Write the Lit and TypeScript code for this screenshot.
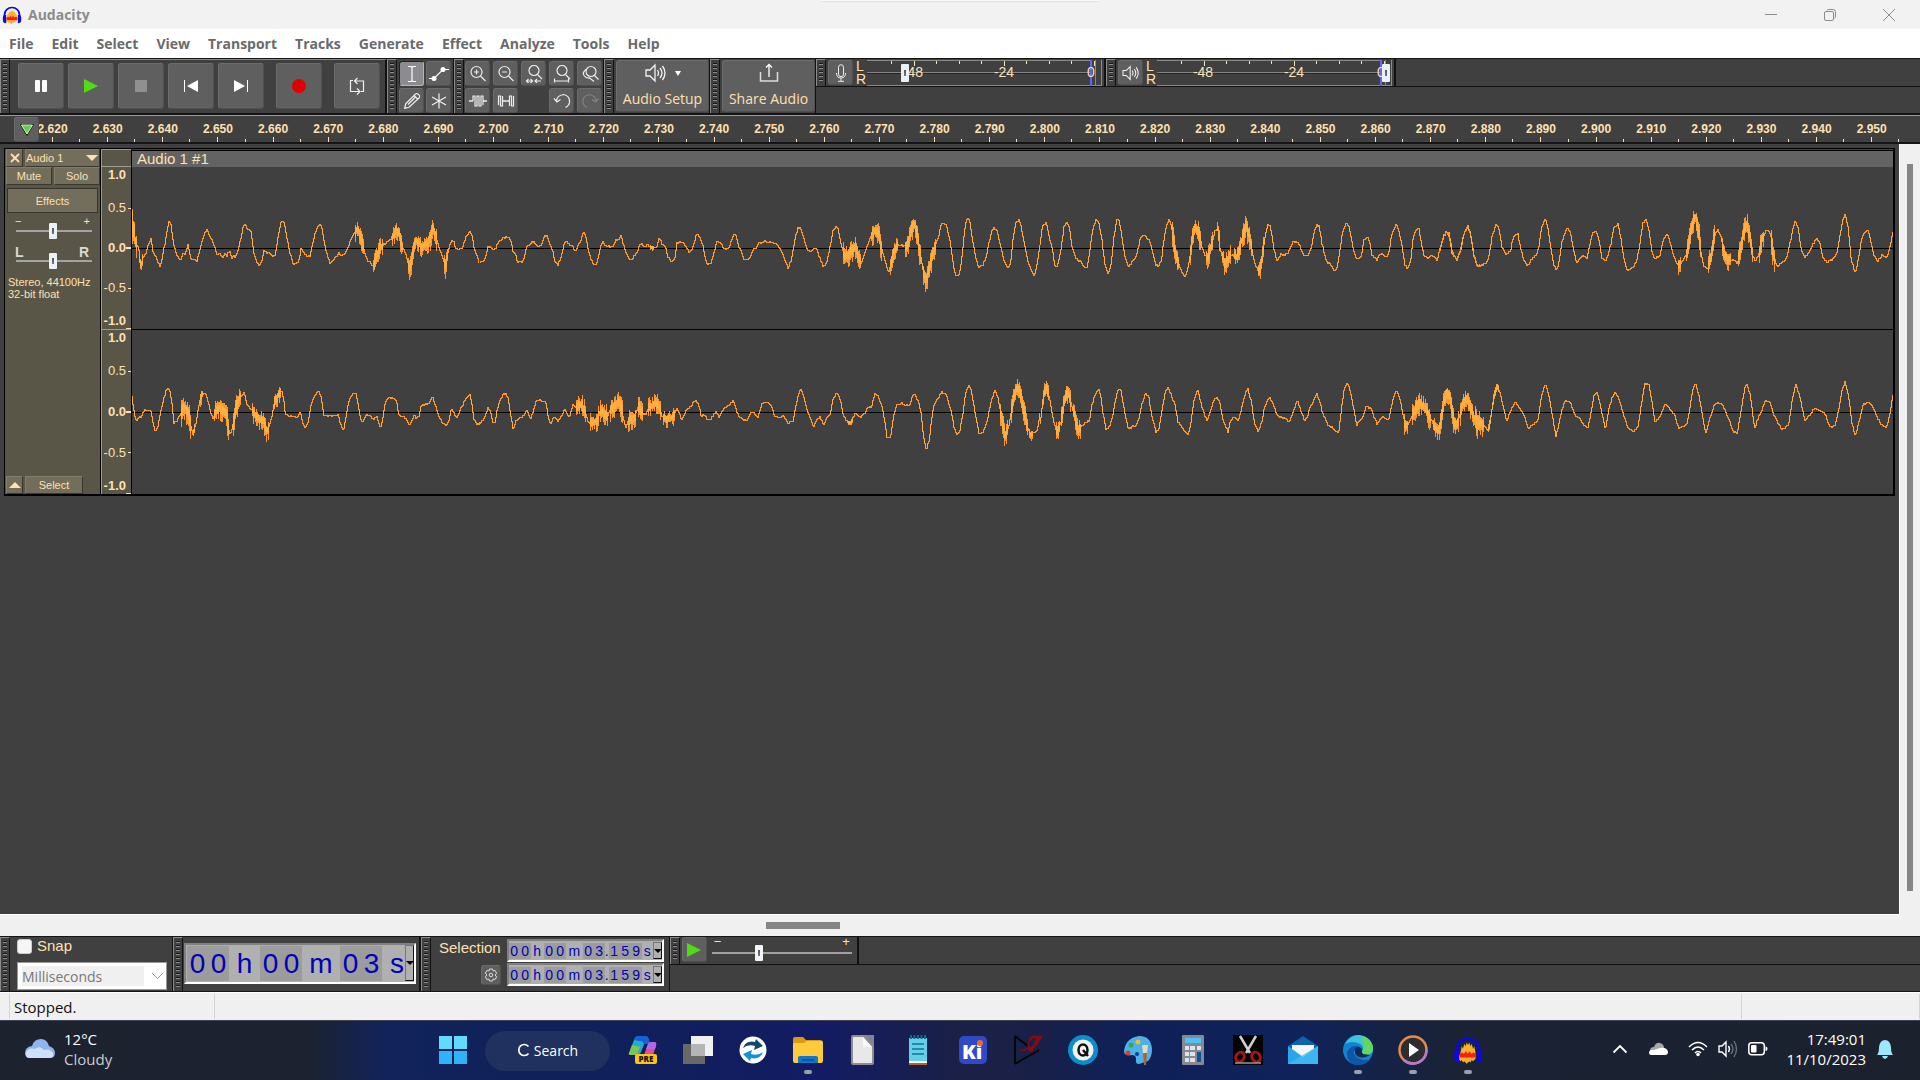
import { LitElement, html, svg, css } from "lit";
import { customElement, property } from "lit/decorators.js";

/* ---------- waveform data ---------- */

interface Block {
  /** Offset of the block inside the clip, in pixels. */
  start: number;
  /** Horizontal samples per pixel. */
  rate: number;
  /** Value that lies on the zero line. */
  zero: number;
  /** "position,value" pairs; three value units to a pixel. */
  points: string;
  /** Noisy stretches: from, to, reach upwards, reach downwards. */
  noise: number[][];
}

const LEFT: Block[] = [
  {
    start: -132, rate: 3, zero: 325,
    points: "396,222 398,285 402,260 405,300 412,318 416,318 421,380 424,375 430,350 436,345 444,315 453,297 460,338 470,355 481,380 488,345 496,305 503,265 507,243 512,245 517,285 524,325 530,340 538,358 542,357 548,340 556,342 564,314 571,350 577,360 580,355 591,363 600,328 605,305 612,285 621,265 628,285 636,300 645,325 652,345 660,340 668,355 676,340 681,350 684,340 690,335 695,355 700,345 706,350 712,338 722,300 729,262 735,252 742,265 753,275 760,330 770,365 779,377 786,360 792,330 797,338 805,335 812,345 820,350 826,345 834,290 842,250 848,241 854,250 860,290 868,330 875,355 881,373 895,368 904,323 912,335 920,349 930,348 938,310 946,275 960,253 966,265 972,300 980,340 990,367 996,363 1004,355 1012,345 1016,338 1022,347 1036,340 1045,320 1052,300 1065,275 1068,265 1078,275 1086,310 1098,350 1104,362 1115,372 1122,378 1130,345 1140,322 1152,312 1168,302 1176,290 1188,270 1200,285 1206,320 1215,335 1222,360 1228,385 1236,350 1246,300 1255,305 1266,320 1280,312 1290,290 1300,260 1308,290 1320,330 1328,350 1336,380 1345,330 1352,310 1361,298 1367,325 1378,325 1384,328 1392,310 1398,290 1411,272 1418,295 1424,330 1432,350 1438,367",
    noise: [[396, 408, 20, 40], [418, 426, 10, 10], [1064, 1090, 26, 30], [1117, 1148, 30, 26], [1174, 1206, 24, 34], [1222, 1236, 20, 42], [1238, 1284, 22, 36], [1286, 1310, 24, 40], [1332, 1342, 20, 40]],
  },
  {
    start: 348, rate: 2.8, zero: 325,
    points: "0,367 8,363 15,355 22,322 30,320 38,328 45,322 50,308 65,294 80,290 86,300 92,332 98,337 105,365 118,366 125,350 131,318 140,314 150,302 160,317 168,318 174,312 180,290 188,287 194,305 204,335 210,365 218,375 228,350 236,310 242,300 250,314 257,315 265,330 270,330 276,312 284,300 290,272 296,287 304,335 312,358 318,373 325,373 332,350 338,320 344,302 352,320 360,318 372,320 380,300 390,298 394,287 402,312 408,335 416,355 424,360 434,345 440,335 450,310 462,320 468,314 476,318 488,325 497,315 502,290 510,312 520,320 526,350 534,363 545,358 552,308 560,307 570,308 580,325 587,338 595,325 600,308 606,278 615,290 625,320 632,360 638,373 648,368 656,335 663,303 675,312 685,327 696,325 705,300 712,283 718,288 724,318 732,335 738,355 744,362 758,350 766,328 775,323 780,308 790,308 797,303 805,308 812,304 820,308 830,312 840,325 850,350 862,382 872,362 878,320 884,288 890,264 898,265 906,290 916,328 926,334 936,322 944,326 950,350 962,380 970,370 978,330 988,275 996,257 1003,265 1010,310 1018,335 1022,350 1032,345 1044,325 1052,320 1060,350 1068,372 1078,335 1088,305 1096,285 1106,272 1116,280 1124,320 1132,355 1144,395 1152,365 1160,330 1168,315 1178,313 1188,318 1198,310 1206,275 1214,248 1222,262 1230,325 1240,385 1250,420 1258,385 1268,340 1276,315 1285,285 1290,258 1297,248 1306,257 1316,300 1325,370 1331,405 1340,405 1348,370 1354,300 1360,250 1366,234 1371,240 1378,290 1388,350 1396,382 1408,375 1418,350 1424,315 1434,268 1440,264 1448,272 1458,318 1468,365 1478,382 1486,366 1492,300 1500,250 1508,238 1514,250 1524,310 1536,370 1552,408 1562,360 1568,315",
    noise: [[474, 486, 6, 10], [1016, 1066, 30, 36], [1094, 1124, 28, 38], [1148, 1170, 22, 30], [1190, 1232, 22, 40], [1238, 1274, 26, 40]],
  },
  {
    start: 868, rate: 3, zero: 325,
    points: "120,312 128,255 137,248 142,260 150,300 158,330 164,375 172,380 180,345 187,300 192,262 200,248 208,260 216,318 224,345 234,362 240,360 256,384 262,380 270,325 278,270 288,238 296,245 306,300 314,370 325,402 334,370 342,290 350,240 357,240 365,285 374,345 386,380 400,362 410,345 420,300 430,281 438,290 450,305 460,345 466,372 474,378 484,365 490,310 500,255 508,235 516,265 524,325 534,370 546,395 554,410 562,395 570,350 578,285 586,265 596,275 606,320 614,345 624,350 636,310 646,270 654,268 660,325 668,352 678,375 688,345 700,345 710,352 720,325 728,285 738,255 748,280 758,340 766,375 778,395 788,345 796,285 805,250 812,262 822,330 832,362 842,342 862,343 870,325 880,303 896,308 910,345 924,345 934,325 942,280 950,253 958,258 966,310 976,352 984,372 988,367 1003,392 1012,380 1020,330 1028,275 1040,246 1048,262 1058,315 1064,345 1074,358 1084,348 1092,300 1102,290 1108,300 1116,345 1130,360 1137,345 1148,342 1160,352 1168,335 1174,290 1182,265 1189,252 1196,270 1206,315 1214,372 1222,385 1232,360 1240,290 1248,270 1256,262 1264,310 1272,345 1284,355 1294,342 1302,350 1311,362 1320,325 1330,290 1342,275 1350,300 1356,340 1370,358 1382,325 1392,280 1404,257 1412,285 1422,345 1434,380 1440,372",
    noise: [[514, 536, 30, 30], [568, 600, 30, 36], [616, 638, 26, 36], [650, 658, 24, 10], [664, 692, 28, 40], [700, 720, 26, 26], [724, 753, 26, 40], [774, 790, 24, 32]],
  },
  {
    start: 1308, rate: 3, zero: 445,
    points: "0,452 6,425 12,405 20,394 28,400 36,450 50,480 64,445 72,400 84,378 92,400 100,460 112,498 124,495 138,490 148,465 156,410 168,375 176,382 186,440 198,465 212,450 220,410 234,402 242,445 250,475 262,500 274,478 288,465 296,445 304,385 316,355 324,385 332,440 340,490 350,512 358,480 366,425 382,382 392,400 400,445 410,487 424,472 430,467 442,472 450,430 460,395 468,392 476,412 486,475 496,485 506,460 514,425 522,380 534,372 542,410 550,465 560,510 575,507 590,485 600,430 608,370 618,357 626,385 636,455 646,477 660,465 670,420 682,402 692,430 702,470 714,495 726,485 740,465 750,410 758,370 767,345 776,400 784,465 792,500 804,505 814,460 824,405 834,388 844,410 852,460 864,475 880,480 892,490 902,450 912,395 920,370 930,410 938,465 946,482 958,460 966,415 982,388 992,400 1000,460 1010,500 1024,490 1040,475 1048,440 1058,390 1066,363 1074,380 1084,450 1094,472 1106,460 1114,440 1130,413 1140,430 1148,470 1160,487 1174,480 1190,462 1198,420 1208,360 1216,342 1224,380 1234,480 1246,518 1256,475 1264,420 1276,392 1286,395 1294,430 1302,465 1312,485 1328,462 1340,474 1350,440 1358,402 1362,390",
    noise: [[712, 722, 36, 32], [738, 780, 34, 30], [802, 824, 30, 20], [844, 872, 26, 36], [892, 936, 30, 28], [956, 970, 30, 30], [992, 1004, 20, 40]],
  },
];

const RIGHT: Block[] = [
  {
    start: -132, rate: 3, zero: 817,
    points: "396,768 400,800 405,830 410,843 418,830 425,828 432,812 440,808 452,810 458,840 466,878 474,858 480,825 488,790 498,752 505,745 511,755 517,800 522,848 532,840 540,825 548,805 562,805 570,840 578,885 588,850 596,800 604,762 618,760 626,790 634,825 640,838 648,810 660,805 668,815 680,825 686,870 691,885 700,850 708,810 716,775 733,758 740,790 750,805 760,815 770,825 780,840 790,835 798,870 806,865 816,830 824,785 834,765 846,752 852,785 856,822 866,828 880,828 892,835 900,815 908,845 917,863 926,840 932,800 942,770 956,753 964,775 972,825 980,828 990,825 1006,828 1014,820 1020,848 1030,873 1038,835 1046,785 1058,762 1068,758 1076,800 1082,840 1088,848 1100,822 1112,830 1122,835 1132,832 1142,865 1150,825 1156,785 1166,773 1182,772 1190,785 1196,825 1206,828 1216,832 1228,855 1236,840 1244,825 1250,835 1258,825 1264,795 1275,792 1286,790 1298,768 1306,795 1316,825 1326,845 1338,857 1348,840 1354,808 1362,815 1370,835 1378,815 1386,798 1398,775 1410,763 1416,795 1422,835 1430,853 1440,850",
    noise: [[542, 570, 30, 50], [577, 582, 12, 8], [598, 607, 16, 26], [642, 684, 30, 40], [698, 720, 32, 34], [756, 806, 24, 34], [822, 842, 20, 28]],
  },
  {
    start: 348, rate: 2.8, zero: 817,
    points: "0,850 8,840 16,825 22,805 30,815 36,845 42,845 48,810 56,780 68,760 78,768 86,825 93,867 102,840 115,832 124,825 131,810 142,838 150,810 156,785 166,778 175,785 184,785 192,835 198,852 208,830 220,843 230,825 238,806 250,832 260,795 272,800 284,795 296,820 304,850 316,845 328,845 338,810 346,815 356,830 366,805 378,800 392,785 400,825 408,862 420,835 432,835 442,800 452,815 464,825 474,800 486,795 500,790 510,830 526,835 540,828 553,805 565,842 578,808 590,800 604,778 614,800 620,832 628,822 640,842 652,830 660,812 670,832 680,810 694,797 710,783 718,812 728,835 738,836 746,845 758,818 768,820 778,832 790,790 805,787 815,793 826,830 838,832 850,828 862,848 876,845 884,800 892,762 898,748 906,765 916,810 922,825 934,860 944,835 952,830 963,855 972,830 980,822 988,780 998,758 1006,768 1018,825 1030,848 1040,848 1050,820 1068,830 1080,815 1086,800 1096,802 1106,760 1116,770 1126,800 1134,850 1140,892 1150,890 1158,830 1166,795 1180,787 1190,797 1204,795 1210,770 1217,760 1228,785 1236,825 1242,890 1250,928 1258,900 1264,840 1270,800 1282,775 1294,755 1306,765 1320,815 1328,865 1336,883 1344,870 1352,820 1360,760 1368,735 1376,750 1386,815 1398,882 1408,878 1420,845 1432,780 1442,750 1450,770 1460,830 1470,885 1480,860 1490,800 1500,750 1508,740 1518,785 1530,850 1540,880 1552,878 1562,865 1568,820",
    noise: [[268, 296, 34, 24], [308, 332, 32, 30], [336, 358, 32, 38], [364, 398, 32, 34], [414, 434, 26, 34], [440, 456, 34, 32], [470, 506, 32, 28], [510, 544, 22, 28], [1030, 1042, 6, 6], [1456, 1478, 26, 32], [1486, 1532, 28, 30], [1536, 1546, 10, 26]],
  },
  {
    start: 868, rate: 3, zero: 817,
    points: "120,850 124,825 130,765 140,740 150,780 160,840 172,880 182,850 192,790 204,755 214,790 224,830 234,870 244,858 256,848 268,840 276,795 284,765 296,747 302,765 308,815 318,866 328,860 338,830 346,780 356,744 364,755 374,815 386,868 400,858 410,855 418,830 426,790 436,760 446,768 456,830 468,876 478,862 486,810 496,755 504,740 514,765 524,790 534,845 548,864 564,885 572,855 582,780 593,748 602,785 612,820 622,842 632,810 642,780 652,772 660,790 668,835 684,876 692,840 702,832 716,840 726,800 736,760 744,745 754,785 764,850 774,874 786,845 794,800 808,770 820,795 830,820 840,830 854,832 868,846 878,820 892,780 902,810 914,840 922,830 930,802 940,785 950,760 960,785 968,820 980,845 984,858 998,862 1016,880 1024,810 1032,750 1042,725 1052,755 1060,800 1070,855 1080,842 1090,830 1098,798 1114,805 1122,832 1132,852 1142,835 1150,830 1166,842 1174,800 1184,760 1192,753 1202,785 1210,830 1218,860 1230,840 1242,815 1256,790 1270,800 1284,820 1296,840 1306,868 1318,868 1328,800 1340,755 1350,770 1360,830 1370,860 1380,820 1390,785 1400,770 1410,800 1422,830 1434,860 1440,850",
    noise: [[128, 144, 26, 30], [168, 178, 24, 30], [182, 212, 26, 34], [218, 242, 24, 34], [1212, 1222, 14, 36], [1236, 1292, 32, 38], [1298, 1332, 28, 32], [1336, 1374, 18, 34], [1380, 1440, 22, 34]],
  },
  {
    start: 1308, rate: 3, zero: 937,
    points: "0,970 8,930 20,870 32,890 42,970 52,970 64,930 78,890 90,915 100,940 112,955 124,970 146,990 156,930 162,885 172,855 182,885 192,930 200,965 210,935 226,905 240,925 252,945 264,985 280,973 294,960 304,890 316,852 326,880 334,930 348,1008 356,975 366,930 376,900 392,908 404,942 418,955 432,975 444,982 454,935 462,885 472,875 482,920 496,988 506,930 516,895 526,873 538,900 550,940 562,980 578,996 594,980 604,915 614,852 626,850 636,905 646,968 662,945 676,912 690,925 704,945 716,985 740,975 748,935 758,870 767,848 778,890 788,950 797,1002 808,960 824,910 844,908 856,930 868,960 880,995 892,1000 904,930 914,865 922,852 932,890 944,985 956,950 966,930 974,903 990,905 1000,940 1012,965 1026,990 1046,975 1056,905 1068,852 1080,890 1094,962 1110,945 1124,922 1140,932 1156,942 1170,982 1186,975 1198,920 1206,870 1216,845 1226,890 1236,970 1246,1005 1256,970 1270,912 1288,907 1300,920 1310,950 1324,972 1340,982 1350,940 1358,890 1362,880",
    noise: [[0, 10, 24, 28], [14, 34, 12, 30], [34, 56, 24, 40], [72, 98, 20, 30], [104, 130, 28, 34], [144, 150, 10, 6], [158, 176, 6, 10]],
  },
];

const CLIP_WIDTH = 1761;

/** Repeatable value from 0 to 1 for a pixel column. */
const jitter = (n: number) => {
  const v = Math.sin(n * 127.1 + 11.7) * 43758.5453;
  return v - Math.floor(v);
};

/** Paths for the sample extent and the brighter RMS core, one bar per pixel column. */
function tracePaths(blocks: Block[], zeroY: number) {
  let outer = "";
  let core = "";
  blocks.forEach((b) => {
    const pts = b.points.split(" ").map((p) => p.split(",").map(Number));
    let k = 0;
    const at = (u: number) => {
      while (k < pts.length - 2 && pts[k + 1][0] < u) k++;
      const [x0, y0] = pts[k];
      const [x1, y1] = pts[k + 1];
      return y0 + ((y1 - y0) * (Math.max(u, x0) - x0)) / (x1 - x0);
    };
    const from = Math.round(b.start + pts[0][0] / b.rate);
    const to = Math.round(b.start + pts[pts.length - 1][0] / b.rate);
    let prev = at(pts[0][0]);
    for (let x = from; x < to; x++) {
      const u = (x - b.start) * b.rate;
      const next = at(u + b.rate) + (jitter(x + 0.5) - 0.5) * 5;
      let hi = Math.min(prev, next);
      let lo = Math.max(prev, next);
      const steep = lo - hi > 12;
      const band = b.noise.find((n) => u >= n[0] && u <= n[1]);
      let coreHi = hi;
      let coreLo = lo;
      if (band) {
        const a = 0.2 + 0.8 * jitter(x);
        const c = 0.2 + 0.8 * jitter(x + 500);
        hi -= band[2] * a;
        lo += band[3] * c;
        coreHi -= band[2] * a * 0.5;
        coreLo += band[3] * c * 0.4;
      }
      const bar = (t: number, d: number) => {
        const y = Math.round(zeroY + (t - b.zero) / 3);
        const h = Math.max(1, Math.round(zeroY + (d - b.zero) / 3) - y + 1);
        return `M${x} ${y}h1v${h}h-1z`;
      };
      outer += bar(hi, lo);
      if (band || steep) core += bar(coreHi + (band ? 0 : 3), coreLo - (band ? 0 : 3));
      prev = next;
    }
  });
  return { outer, core };
}

/* ---------- icons ---------- */

const icon = (w: number, h: number, body: unknown) =>
  html`<svg class="ico" width=${w} height=${h} viewBox="0 0 ${w} ${h}" aria-hidden="true">${body}</svg>`;

const speaker = svg`<path d="M1 7h4l5-5v16l-5-5H1z M12.500 7q2 3 0 6 M15 5q4 5 0 10 M17.500 3q5 7 0 14" fill="none" stroke="#f2f2f2" stroke-width="1.300"/>`;
const lens = (body: unknown) => icon(18, 18, svg`<g fill="none" stroke="#ececec" stroke-width="1.200">${body}</g>`);

const headphones = (s: number) => html`<svg class="ico" width=${s} height=${s} viewBox="0 0 24 24" aria-hidden="true">
  <path d="M6 14l1-5 1 2 1-4 1 2 1-3 1 2 1-2 1 3 1-2 1 4 1-2 1 5v5l-2 2-1-1-1 2-1-1-2 2-2-2-1 1-1-2-1 1-2-2z" fill="#f8b030"/>
  <path d="M5.500 15l2-1 1 1 2-2 1 2 2-2 1 2 2-1 2 1v3h-13z" fill="#f8200c"/>
  <path d="M3 14V12a9 9 0 0 1 18 0v2" fill="none" stroke="#0707e8" stroke-width="2"/>
  <path d="M1 15q0-4 4-3v10q-4 0-4-4zM23 15q0-4-4-3v10q4 0 4-4z" fill="#0707e8"/></svg>`;

const TASK_ICONS: { name: string; open?: boolean; art: unknown }[] = [
  { name: "Copilot", art: icon(30, 30, svg`
    <path d="M1 18 6 5q1-4 5-4h6q3 0 4 4l-4 2-4 10q-1 3-4 3H3q-3 0-2-2z" fill="#27a9c9"/>
    <path d="M6 5q1-4 5-4h6q3 0 4 4l2 4h-7q-2-4-5-3z" fill="#1660d8"/>
    <path d="M1 18 4 10l8 2-2 6q-1 2-3 2H3q-3 0-2-2z" fill="#7bc455"/>
    <path d="M16 20l4-11q1-2 4-2h2q3 0 2 4l-3 9z" fill="#e0509a"/><path d="M20 9q1-2 4-2h2q3 0 2 4l-1 3h-9z" fill="#b565e8"/>
    <rect x="7" y="19" width="22" height="10" rx="2" fill="#ffc20e"/>
    <text x="18" y="27" text-anchor="middle" font-family="Open Sans, sans-serif" font-weight="800" font-size="8" fill="#1a1300">PRE</text>`) },
  { name: "Task view", art: icon(30, 30, svg`
    <rect x="0" y="9" width="22" height="20" fill="#686868"/><rect x="8" y="1" width="22" height="20" fill="#f1f1f1"/><rect x="8" y="9" width="14" height="12" fill="#b5b5b5"/>`) },
  { name: "Sync", art: icon(30, 30, svg`
    <circle cx="15" cy="15" r="13.500" fill="#fff"/>
    <path d="M5 13q3-8 12-6l1-3 7 7-9 4 1-4q-7-2-12 2z" fill="#14496e"/><path d="M25 17q-3 8-12 6l-1 3-7-7 9-4-1 4q7 2 12-2z" fill="#0f94d8"/>`) },
  { name: "File Explorer", open: true, art: icon(30, 30, svg`
    <path d="M0 4q0-2 2-2h8l3 3h14q3 0 3 3v6H0z" fill="#dc9a12"/><path d="M0 8h11l3-2h14q2 0 2 2v18q0 2-2 2H2q-2 0-2-2z" fill="#ffcb3d"/>
    <path d="M5 28v-5q0-2 2-2h16q2 0 2 2v5z" fill="#1277c8"/><path d="M9 25h12" stroke="#0a4f94" stroke-width="1.500"/>`) },
  { name: "LibreOffice", art: icon(30, 30, svg`
    <path d="M15 0h11v12z" fill="#7c8796"/><path d="M3 2q0-2 2-2h11l10 11v17q0 2-2 2H5q-2 0-2-2z" fill="#8d8d8d"/><path d="M5 3q0-1 1-1h9l9 10v15q0 1-1 1H6q-1 0-1-1z" fill="#e8e8e8"/><path d="M15 2v10h9z" fill="#fafafa"/>`) },
  { name: "Notepad", art: icon(30, 30, svg`
    <path d="M6 3h18v23H6z" fill="#62d0e8"/><path d="M6 26h18v2H6z" fill="#fff"/><path d="M6 28h18v2H6z" fill="#b8641e"/>
    <path d="M8 0v4M11.500 0v4M15 0v4M18.500 0v4M22 0v4" stroke="#11698c" stroke-width="2"/><path d="M9 9h12M9 14h12M9 19h12" stroke="#147291" stroke-width="1.500"/>`) },
  { name: "KiCad", art: icon(30, 30, svg`
    <rect x="1" y="1" width="28" height="28" rx="5" fill="#2f49c9"/>
    <text x="4" y="24" font-family="Open Sans, sans-serif" font-weight="800" font-size="20" fill="#fff">Ki</text><circle cx="22" cy="8" r="3" fill="#f26a21"/>`) },
  { name: "Schematic editor", art: icon(30, 30, svg`
    <path d="M2 1v28M2 29l24-14M2 1l18 14" fill="none" stroke="#050505" stroke-width="1.800"/><path d="M4 14q6 2 10-1l2-9q2-4 6-3h8L19 17q-3 0-4-3-5 4-11 0z" fill="#850b0e"/><path d="M19 4q-4 3-3 8 5 0 7-9z" fill="#17204a"/>`) },
  { name: "QuickAccess", art: icon(30, 30, svg`
    <circle cx="15" cy="15" r="15" fill="#0b8fcb"/><circle cx="15" cy="15" r="10.500" fill="#f2f2f2"/><ellipse cx="15" cy="15" rx="4.500" ry="5.500" fill="none" stroke="#111" stroke-width="2.500"/><path d="M15 15l5 6" stroke="#111" stroke-width="2.500"/>`) },
  { name: "Paint", art: icon(30, 30, svg`
    <path d="M1 17Q2 3 16 1q12 0 13 13 0 8-4 12l-9 3q-4 0-3-5 0-4-4-4-7 1-8-3z" fill="#4db2ec"/>
    <circle cx="5" cy="18" r="2.500" fill="#d4432f"/><circle cx="8" cy="10" r="2.500" fill="#34a853"/><circle cx="15" cy="7" r="2.500" fill="#f5b921"/><circle cx="14" cy="19" r="2" fill="#123a8c"/>
    <path d="M19 10h6l-1 8h-4z" fill="#f0d6b5"/><path d="M20 18h4l-1 12h-2z" fill="#b0642a"/>`) },
  { name: "Calculator", art: icon(30, 30, svg`
    <rect x="4" y="0" width="22" height="30" rx="1" fill="#858a92"/><rect x="7" y="3" width="16" height="5" fill="#4cc2f5"/>
    <path d="M7 11h4v4H7zM12 11h5v4h-5zM19 11h4v4h-4zM7 17h4v4H7zM12 17h5v4h-5zM7 23h4v4H7zM12 23h5v4h-5z" fill="#dfe3e8"/><path d="M19 17h4v10h-4z" fill="#0f4f9c"/>`) },
  { name: "Snip editor", art: icon(30, 30, svg`
    <rect width="30" height="30" fill="#020202"/><path d="M7 1l10 17M23 1L13 18" stroke="#cfcfcf" stroke-width="2.500"/>
    <ellipse cx="7" cy="22" rx="4" ry="5" fill="none" stroke="#a31616" stroke-width="3" transform="rotate(30 7 22)"/><ellipse cx="23" cy="22" rx="4" ry="5" fill="none" stroke="#a31616" stroke-width="3" transform="rotate(-30 23 22)"/><path d="M2 28h26" stroke="#9a9a9a" stroke-width="1.500"/>`) },
  { name: "Mail", art: icon(30, 30, svg`
    <path d="M0 11 15 1l15 10v6H0z" fill="#0c62ae"/><path d="M4 10h22v8L15 23 4 18z" fill="#f4f4f4"/><path d="M0 11l15 11 15-11v18H0z" fill="#2aa5ea"/><path d="M0 29l18-11 12-7v18z" fill="#45bdf5" opacity=".7"/>`) },
  { name: "Edge", open: true, art: icon(30, 30, svg`
    <circle cx="15" cy="15" r="15" fill="#1383d0"/><path d="M2 9Q7 0 16 0q13 2 14 13 0 7-7 7-5 0-4-3 3-5-2-8Q9 5 2 9z" fill="#3bc3e0"/><path d="M20 1q10 4 10 13-1 6-7 6-5 0-4-3 4-9-1-13z" fill="#62d663"/>
    <path d="M10 15q1 11 17 10-6 6-15 5-8-3-8-11 1-8 9-8 4 0 5 3-6-1-8 4z" fill="#0d56a8"/><path d="M12 14q3-4 7 0-1 3 1 5l7 1q-9 5-14 0-2-3-1-6z" fill="#132a55"/>`) },
  { name: "Media Player", open: true, art: icon(30, 30, svg`
    <circle cx="15" cy="15" r="13.500" fill="#2d2d2f" stroke="#e58a4e" stroke-width="2.500"/><path d="M28.500 15A13.500 13.500 0 0 1 6 25" fill="none" stroke="#b07ad0" stroke-width="2.500"/><path d="M11 8v14l10-7z" fill="#fff"/>`) },
  { name: "Audacity", open: true, art: headphones(30) },
];

/* ---------- small elements ---------- */

@customElement("time-field")
class TimeField extends LitElement {
  @property() value = "";
  @property() label = "";
  @property({ type: Boolean }) large = false;

  static styles = css`
    :host { display: flex; box-sizing: border-box; height: 23px; padding: 2px 0 1px; background: #b0b0b0; color: #0000b8;
      border: 2px solid; border-color: #808080 #fff #fff #808080; font: 14px/17px "Liberation Sans", Arial, sans-serif; }
    :host([large]) { height: 41px; padding: 1px 0 1px 1px; font-size: 28px; line-height: 36px; }
    .digit, .unit, .point { box-sizing: border-box; width: 11px; flex: none; text-align: center; font: inherit; color: inherit; padding: 0; margin: 0; border: 0; }
    .digit { background: #9c9c9c; border-radius: 0; }
    .h { width: 13px; }
    .m { width: 17px; }
    .point { width: 4px; }
    :host([large]) .digit { width: 21px; }
    :host([large]) .h { width: 31px; }
    :host([large]) .m { width: 38px; }
    :host([large]) .s { width: 22px; text-align: right; }
    .pick { margin: -1px 0 0 auto; width: 9px; flex: none; padding: 0; background: #b0b0b0; border: 1px solid; border-color: #777 #111 #111 #777;
      display: grid; place-items: center; }
    .arrow { border: 4px solid transparent; border-top-color: #000; border-bottom: 0; }
  `;

  render() {
    return html`${[...this.value].map((c, i) =>
      /\d/.test(c)
        ? html`<input class="digit" maxlength="1" .value=${c} aria-label="${this.label} digit ${i + 1}">`
        : html`<span class=${c === "." ? "point" : `unit ${c}`}>${c}</span>`)}
      <button class="pick" aria-label="${this.label} format"><span class="arrow"></span></button>`;
  }
}

@customElement("level-meter")
class LevelMeter extends LitElement {
  @property() label = "";
  @property({ type: Number }) value = 0;

  static styles = css`
    :host { display: grid; width: 235px; height: 26px; }
    .scale, .volume { grid-area: 1 / 1; }
    .scale { display: block; font: 14px "Liberation Sans", Arial, sans-serif; fill: #ffe0b0; }
    .volume { appearance: none; margin: 0; width: 100%; height: 26px; background: none; }
    .volume::-webkit-slider-thumb { appearance: none; width: 8px; height: 18px; border-radius: 1px;
      background: linear-gradient(#555, #777) center / 2px 6px no-repeat, #e9f2fb; }
  `;

  render() {
    const ticks = Array.from({ length: 10 }, (_, i) => 24 + Math.round(i * 22.55));
    return html`<svg class="scale" width="235" height="26" viewBox="0 0 235 26" shape-rendering="crispEdges">
        <path d="M0 0h224M0 25.500h235M228.500 0v26M234.500 0v26" stroke="#8b8b8b"/>
        <path d="M0 12.500h224" stroke="#858585"/><path d="M0 13.500h224" stroke="#262626"/>
        <rect x="223" width="2" height="26" fill="#6464ff"/>
        <path d=${ticks.map((x, i) => `M${x} 1v${i % 4 === 1 ? 5 : 3}`).join("")} stroke="#ffe0b0"/>
        <g shape-rendering="auto"><text x="46" y="17" text-anchor="middle">-48</text><text x="137" y="17" text-anchor="middle">-24</text><text x="224" y="17" text-anchor="middle">0</text></g>
      </svg>
      <input class="volume" type="range" min="0" max="100" .value=${String(this.value)} aria-label=${this.label}>`;
  }
}

@customElement("audio-track")
class AudioTrack extends LitElement {
  static styles = css`
    :host { display: grid; grid-template-columns: 96px 31px 1fr; border: 1px solid #000; border-width: 1px 2px 2px 1px;
      font: 11px/12px "Liberation Sans", Arial, sans-serif; color: #ffe0b0; }
    button { font: inherit; color: inherit; margin: 0; padding: 0; }
    .panel { display: flex; flex-direction: column; background: #5a5647; border-right: 1px solid #000; }
    .row { display: flex; gap: 2px; padding-left: 1px; }
    .cell { background: #736d5b; border: 1px solid; border-color: #827c6a #3a382e #3a382e #827c6a; height: 18px; box-sizing: border-box;
      display: flex; align-items: center; justify-content: center; }
    .grow { flex: 1; }
    .square { width: 17px; }
    .name { flex: 1; justify-content: space-between; padding: 0 1px 0 0; }
    .down { border: 6px solid transparent; border-top-color: #ffe0b0; border-bottom: 0; }
    .up { border: 6px solid transparent; border-bottom-color: #ffe0b0; border-top: 0; }
    .fx { height: 25px; margin: 3px 2px 5px; border-color: #37352c; }
    .marks { display: flex; justify-content: space-between; padding: 0 10px; height: 6px; line-height: 6px; }
    .pan { height: 15px; line-height: 15px; font-size: 14px; font-weight: bold; color: #dcd9d0; padding: 0 11px 0 10px; margin-top: 6px; }
    .slider { appearance: none; display: block; margin: -2px 8px 0 11px; height: 17px; background: linear-gradient(#a4a4a4, #a4a4a4) center / 100% 2px no-repeat; }
    .slider::-webkit-slider-thumb { appearance: none; width: 8px; height: 16px; border-radius: 1px;
      background: linear-gradient(#555, #777) center / 2px 6px no-repeat, #e9f2fb; }
    .raise { margin-top: -8px; }
    .info { padding: 7px 0 0 3px; }
    .bottom { margin-top: auto; }
    .pick { width: 58px; }
    .ruler { display: grid; grid-template-rows: 18px 162px 1px 164px; background: #5a5647; border-right: 1px solid #000; box-sizing: border-box; }
    .corner { border: 1px solid #9a9a9a; border-width: 1px 0 1px 1px; box-sizing: border-box; }
    .scale { display: grid; grid-template-rows: 16px 5fr 3fr 5fr 16px; border-left: 1px solid #9a9a9a; font-size: 13px; }
    .tick { display: flex; align-items: center; justify-content: flex-end; gap: 2px; }
    .tick::after { content: ""; width: 3px; height: 1px; background: #ffe0b0; }
    .strong { font-weight: bold; }
    .zero { gap: 0; }
    .zero::after { width: 5px; height: 2px; }
    .first::after { background: none; }
    .end { gap: 0; }
    .end::after { align-self: flex-end; width: 5px; }
    .rule { background: #9a9a9a; }
    .clip { display: grid; grid-template-rows: 1px 1px 16px 327px; }
    .edge { grid-row: 2; background: #000; }
    .title { grid-row: 3; background: #636363; font-size: 15px; line-height: 16px; padding-left: 5px; }
    .wave { grid-row: 4; display: block; width: 100%; height: 327px; background: #404040; }
  `;

  render() {
    const left = tracePaths(LEFT, 81);
    const right = tracePaths(RIGHT, 245);
    const scale = html`<div class="scale">
      <span class="tick strong first">1.0</span><span class="tick">0.5</span><span class="tick strong zero">0.0</span><span class="tick">-0.5</span><span class="tick strong end">-1.0</span></div>`;
    return html`
      <div class="panel">
        <div class="row">
          <button class="cell square" aria-label="Close track">${icon(10, 10, svg`<path d="M1 1l8 8M9 1L1 9" stroke="#ffe0b0" stroke-width="1.800"/>`)}</button>
          <button class="cell name">Audio 1<span class="down"></span></button>
        </div>
        <div class="row"><button class="cell grow">Mute</button><button class="cell grow">Solo</button></div>
        <button class="cell fx">Effects</button>
        <div class="marks"><span>−</span><span>+</span></div>
        <input class="slider" type="range" .value=${"49"} aria-label="Gain">
        <div class="marks pan"><span>L</span><span>R</span></div>
        <input class="slider raise" type="range" .value=${"49"} aria-label="Pan">
        <div class="info">Stereo, 44100Hz<br>32-bit float</div>
        <div class="row bottom"><button class="cell square" aria-label="Collapse"><span class="up"></span></button><button class="cell pick">Select</button></div>
      </div>
      <div class="ruler"><div class="corner"></div>${scale}<div class="rule"></div>${scale}</div>
      <div class="clip">
        <div class="edge"></div>
        <div class="title">Audio 1 #1</div>
        <svg class="wave" viewBox="0 0 ${CLIP_WIDTH} 327" preserveAspectRatio="none" shape-rendering="crispEdges" role="img" aria-label="Stereo waveform">
          <path d="M0 81.500H1761M0 162.500H1761M0 245.500H1761" stroke="#000"/>
          <path d="${left.outer}${right.outer}" fill="#ff9428"/>
          <path d="${left.core}${right.core}" fill="#ffae40"/>
        </svg>
      </div>`;
  }
}

/* ---------- application ---------- */

const MENUS = ["File", "Edit", "Select", "View", "Transport", "Tracks", "Generate", "Effect", "Analyze", "Tools", "Help"];
const TIMES = Array.from({ length: 34 }, (_, i) => (2.62 + i * 0.01).toFixed(3));

@customElement("app-root")
class AppRoot extends LitElement {
  static styles = css`
    :host { display: flex; flex-direction: column; min-height: 100vh; background: #404040; color: #ffe0b0;
      font: 14px "Open Sans", "Noto Sans", sans-serif; }
    * { box-sizing: border-box; }
    button { font: inherit; color: inherit; margin: 0; padding: 0; border: 0; background: none; }
    .ico { display: block; flex: none; }

    .titlebar { display: grid; grid-template-columns: 1fr auto 1fr; height: 29px; background: #f2f2f2; color: #8c8c8c; }
    .brand { display: flex; align-items: center; gap: 6px; padding-left: 2px; font-weight: 700; }
    .notch { width: 278px; height: 2px; background: #fbfbfb; border-bottom: 1px solid #e2e2e2; }
    .window { display: flex; justify-content: flex-end; padding-right: 2px; }
    .window button { width: 59px; display: grid; place-items: center; }
    .menus { display: flex; height: 29px; background: #fff; color: #6a6a6a; font-weight: 700; }
    .menus button { padding: 0 9px; }

    .dock { display: flex; height: 56px; border: 1px solid #151515; border-width: 1px 0; flex: none; }
    .grip { width: 10px; flex: none; border: 1px solid #8a8a8a; border-right-color: #111; border-bottom: 0; padding: 3px 2px; }
    .grip::before { content: ""; display: block; height: 100%; background: repeating-linear-gradient(#1a1a1a 0 1px, #8a8a8a 1px 2px, #404040 2px 4px); }
    .set { display: flex; padding: 3px 5px 4px 8px; gap: 4px; border-right: 2px solid #111; border-top: 1px solid #8a8a8a; }
    .key { display: grid; place-items: center; background: #5f5f5f; border: 1px solid; border-color: #6c6c6c #515151 #515151 #6c6c6c; border-radius: 3px; }
    .big { width: 46px; height: 46px; }
    .apart { margin-left: 8px; }
    .tools { display: grid; grid-template-columns: repeat(2, 25px); gap: 2px; padding: 2px 2px 0; align-content: start; border-right: 1px solid #111; }
    .edit { grid-template-columns: repeat(5, 25px); column-gap: 3px; padding: 2px 1px 0 1px; }
    .small { width: 25px; height: 25px; }
    .on { background: #8b8b90; border-color: #222 #b5b5b5 #b5b5b5 #222; }
    .wide { display: flex; padding: 1px 0 1px 2px; border-right: 1px solid #111; }
    .wide .key { width: 93px; height: 52px; grid-template-rows: 24px 26px; }
    .combo { display: flex; align-items: center; gap: 8px; }
    .caret { border: 3px solid transparent; border-top: 5px solid #fff; border-bottom: 0; }
    .rest { flex: 1; }
    .line { display: flex; height: 28px; border-bottom: 1px solid #111; }
    .meter { display: flex; padding: 1px 2px 0; gap: 3px; border-right: 2px solid #111; }
    .lr { font: 14px/13px "Liberation Sans", Arial, sans-serif; width: 8px; }

    .timeline { display: flex; height: 30px; border: 1px solid #151515; border-width: 1px 0 2px; flex: none; }
    .pin { display: flex; padding: 1px 0 0 14px; border-top: 1px solid #9a9a9a; }
    .times { flex: 1; display: flex; overflow: hidden; padding-right: 21px; border-top: 1px solid #9a9a9a; }
    .time { flex: 1; display: flex; flex-direction: column; align-items: center; justify-content: space-between; padding-top: 6px;
      font: bold 12px/14px "Liberation Sans", Arial, sans-serif;
      background: linear-gradient(#ffe0b0, #ffe0b0) right bottom / 1px 3px no-repeat; }
    .time::after { content: ""; width: 1px; height: 5px; background: #ffe0b0; }
    .time:first-child { margin-left: -14px; }

    .body { flex: 1; display: grid; grid-template-columns: 1fr 20px; }
    .canvas { padding: 4px 4px 0; border-bottom: 1px solid #fff; border-right: 1px solid #fff; }
    .vscroll { background: #f0f0f0; padding: 20px 7px 24px; display: flex; }
    .hscroll { height: 21px; background: #f0f0f0; padding: 7px 0; display: grid; grid-template-columns: 766fr 74fr 1080fr; flex: none; }
    .thumb { flex: 1; background: #858585; grid-column: 2; }

    .ui { font: 15px/17px "Liberation Sans", Arial, sans-serif; }
    .snap { width: 163px; padding: 0 5px 0 7px; border-right: 1px solid #111; display: flex; flex-direction: column; gap: 8px; }
    .check { display: flex; align-items: center; gap: 5px; height: 17px; }
    .box { appearance: none; width: 15px; height: 15px; margin: 2px 0 0; background: #f6f6f6; border: 1px solid #ccc; border-radius: 3px; }
    .format { width: 150px; height: 28px; margin: 0; padding: 0 4px; appearance: none; border: 1px solid #999; border-radius: 0; color: #777; opacity: 1;
      font: 14px "Open Sans", "Noto Sans", sans-serif;
      background: linear-gradient(45deg, transparent 45%, #999 45% 55%, transparent 55%) 134px 10px / 6px 6px no-repeat,
        linear-gradient(-45deg, transparent 45%, #999 45% 55%, transparent 55%) 139px 10px / 6px 6px no-repeat,
        linear-gradient(#f0f0f0, #f0f0f0) 4px 3px / 122px 20px no-repeat, #fff; }
    .position { display: flex; align-items: center; padding: 0 3px 1px 1px; border-right: 2px solid #111; }
    .position time-field { width: 232px; }
    .range { display: grid; grid-template-columns: auto 157px; gap: 1px 6px; padding: 2px 5px 3px 8px; border-right: 1px solid #111; justify-items: end; align-items: center; align-content: start; }
    .range .ui { align-self: start; }
    .range time-field { width: 157px; }
    .gear { width: 20px; height: 20px; }
    .speed { display: flex; gap: 5px; padding: 0 5px 1px 2px; border-right: 2px solid #111; }
    .rate { width: 140px; display: flex; flex-direction: column; }
    .signs { display: flex; justify-content: space-between; padding: 1px 2px 0; height: 7px; font: 13px/8px "Liberation Sans", Arial, sans-serif; }
    .slider { appearance: none; width: 100%; height: 17px; margin: 0; background: linear-gradient(#a0a0a0, #a0a0a0) center / 100% 2px no-repeat; }
    .slider::-webkit-slider-thumb { appearance: none; width: 8px; height: 16px; border-radius: 1px;
      background: linear-gradient(#555, #777) center / 2px 6px no-repeat, #f2f6fa; }

    .status { display: flex; height: 28px; flex: none; background: #f0f0f0; border-top: 1px solid #fff; color: #111; padding: 1px 0 1px 9px; font-size: 15px; line-height: 27px; }
    .slot { border-left: 1px solid #d4d4d4; padding-left: 4px; }
    .state { width: 205px; }
    .message { flex: 1; }
    .extra { width: 179px; border-right: 1px solid #d4d4d4; }

    .taskbar { display: grid; grid-template-columns: 1fr auto 1fr; height: 60px; flex: none; border-top: 1px solid #3c4453; color: #fff; font-size: 15px; line-height: 20px;
      background: linear-gradient(90deg, #1c222e 0, #1c2230 16%, #11235a 20%, #10205a 32%, #131c63 43%, #1a2046 50%, #1a2046 53%, #0f2059 59%, #10225a 68%, #1a2234 76%, #1b212d 100%); }
    .weather { display: flex; align-items: center; gap: 8px; padding: 0 0 4px 24px; text-align: left; }
    .dim { color: #c9ccd2; }
    .apps { display: flex; align-items: center; }
    .app { width: 55px; height: 59px; display: grid; grid-template-rows: 49px 4px; justify-items: center; align-content: start; }
    .app .ico { align-self: center; margin-top: 8px; }
    .app.open::after { content: ""; width: 8px; height: 4px; border-radius: 2px; background: #9a9fac; }
    .search { width: 125px; height: 40px; margin: 0 5px; border-radius: 20px; background: #20305f; display: flex; align-items: center; justify-content: center; gap: 4px; font-size: 14px; }
    .tray { display: flex; align-items: center; justify-content: flex-end; padding: 0 26px 3px 0; }
    .tray .ico { margin-right: 10px; }
    .tray .gap { margin-right: 20px; }
    .clock { text-align: right; margin: 0 10px 0 8px; }
    .tray .bell { margin-right: 0; }
  `;

  private grip = () => html`<div class="grip"></div>`;

  private key(name: string, art: unknown, cls = "small") {
    return html`<button class="key ${cls}" aria-label=${name}>${art}</button>`;
  }

  render() {
    return html`
      <header class="titlebar">
        <div class="brand">${headphones(20)}<span>Audacity</span></div>
        <div class="notch"></div>
        <div class="window">
          <button aria-label="Minimize">${icon(12, 12, svg`<path d="M0 5.500h12" stroke="#8c8c8c"/>`)}</button>
          <button aria-label="Restore">${icon(12, 12, svg`<path d="M3 1.500q0-1 2-1h4q2.500 0 2.500 2.500v4q0 2-1 2" fill="none" stroke="#8c8c8c"/><rect x=".5" y="2.500" width="9" height="9" rx="1.500" fill="none" stroke="#8c8c8c"/>`)}</button>
          <button aria-label="Close">${icon(12, 12, svg`<path d="M0 0l12 12M12 0L0 12" stroke="#8c8c8c"/>`)}</button>
        </div>
      </header>
      <nav class="menus">${MENUS.map((m) => html`<button>${m}</button>`)}</nav>

      <div class="dock">
        ${this.grip()}
        <div class="set">
          ${this.key("Pause", icon(14, 14, svg`<rect x="1" y="1" width="5" height="12" rx="1" fill="#fff"/><rect x="8" y="1" width="5" height="12" rx="1" fill="#fff"/>`), "big")}
          ${this.key("Play", icon(14, 14, svg`<path d="M0 0v14l14-7z" fill="#51dc12"/>`), "big")}
          ${this.key("Stop", icon(12, 12, svg`<rect width="12" height="12" fill="#8f9191"/>`), "big")}
          ${this.key("Skip to start", icon(14, 12, svg`<path d="M.5 0v12" stroke="#fff"/><path d="M14 0v12L3 6z" fill="#fff"/>`), "big")}
          ${this.key("Skip to end", icon(14, 12, svg`<path d="M13.500 0v12" stroke="#fff"/><path d="M0 0v12l11-6z" fill="#fff"/>`), "big")}
          ${this.key("Record", icon(14, 14, svg`<circle cx="7" cy="7" r="7" fill="#e00000"/>`), "big apart")}
          ${this.key("Loop", icon(16, 18, svg`<path d="M4 3.500H1.500v11H10M6 4h8.500v10.500H12M8.500 1L5.500 4l3 3M8 11.500l3 3-3 3" fill="none" stroke="#f0f0f0" stroke-width="1.200"/>`), "big apart")}
        </div>
        ${this.grip()}
        <div class="tools">
          ${this.key("Selection tool", icon(10, 18, svg`<path d="M1 1.500h3l1 1 1-1h3M5 2v14M1 16.500h3l1-1 1 1h3" fill="none" stroke="#fff" stroke-width="1.200"/>`), "small on")}
          ${this.key("Envelope tool", icon(20, 16, svg`<path d="M0 12.500h5L14 3.500h6" fill="none" stroke="#fff" stroke-width="1.200"/><circle cx="5" cy="12.500" r="2.500" fill="#fff"/><circle cx="14" cy="3.500" r="2.500" fill="#fff"/>`))}
          ${this.key("Draw tool", icon(16, 16, svg`<path d="M.7 15.300l1-4.500L11.500 1q2-1 3.500 1t0 3L5 14.300zM10 2.500l3.500 3.500M4 11.500l7-7" fill="none" stroke="#f2f2f2" stroke-width="1.200"/>`))}
          ${this.key("Multi-tool", icon(16, 16, svg`<path d="M8 .5v15M1 4l14 8M15 4L1 12" stroke="#f2f2f2" stroke-width="1.200"/>`))}
        </div>
        ${this.grip()}
        <div class="tools edit">
          ${this.key("Zoom in", lens(svg`<circle cx="7.500" cy="7" r="5.500"/><path d="M11.500 11l5 5M5 7h5M7.500 4.500v5"/>`))}
          ${this.key("Zoom out", lens(svg`<circle cx="7.500" cy="7" r="5.500"/><path d="M11.500 11l5 5M5 7h5"/>`))}
          ${this.key("Fit selection", lens(svg`<circle cx="9" cy="5.500" r="5"/><path d="M12.500 9.500l4.500 4.500M1.500 16h6M10 16h6M3.500 14l-2 2 2 2M5.500 14l2 2-2 2M12 14l-2 2 2 2"/>`))}
          ${this.key("Fit project", lens(svg`<circle cx="9" cy="5.500" r="5"/><path d="M12.500 9.500l4.500 4.500M1.500 16h14M1.500 13.500v4M15.500 13.500v4"/>`))}
          ${this.key("Zoom toggle", lens(svg`<circle cx="10" cy="6.500" r="5"/><path d="M5 4.500q-4 3-2 6t6 2.500M13.500 10.500l4 4M8 12.500l5 4"/>`))}
          ${this.key("Trim", icon(18, 14, svg`<path d="M0 7h4M14 7h4" stroke="#eee" stroke-width="1.500"/><path d="M4 7V2h2v10h2V2h2v10h2V2h2v9" fill="none" stroke="#eee" stroke-width="1.200"/>`))}
          ${this.key("Silence", icon(18, 14, svg`<path d="M6 7h6" stroke="#eee" stroke-width="1.500"/><path d="M1.500 11V2h2v10h2V2M12.500 12V2h2v10h2V2" fill="none" stroke="#eee" stroke-width="1.200"/>`))}
          <span></span>
          ${this.key("Undo", icon(18, 16, svg`<path d="M3.500 8.500q0-6 7-7 6 1 6 7 0 4-4 6M1 5.500l3 3.500 3.500-2.500" fill="none" stroke="#eee" stroke-width="1.200"/>`))}
          ${this.key("Redo", icon(18, 16, svg`<path d="M15 8.500q0-6-7-7-6 1-6 7 0 4 4 6M17.500 5.500l-3 3.500L11 6.500" fill="none" stroke="#828282" stroke-width="1.200"/>`))}
        </div>
        ${this.grip()}
        <div class="wide"><button class="key"><span class="combo">${icon(22, 20, speaker)}<span class="caret"></span></span><span>Audio Setup</span></button></div>
        ${this.grip()}
        <div class="wide"><button class="key">${icon(20, 20, svg`<path d="M1.500 9v9h17V9" fill="none" stroke="#ddd" stroke-width="1.500"/><path d="M10 14V1.500M7 4.500l3-3 3 3" fill="none" stroke="#fff" stroke-width="1.300"/>`)}<span>Share Audio</span></button></div>
        <div class="rest">
          <div class="line">
            ${this.grip()}
            <div class="meter">
              ${this.key("Recording level", icon(12, 18, svg`<rect x="3.500" y=".7" width="5" height="12" rx="2.500" fill="none" stroke="#eee"/><path d="M1.500 9q0 5 4.500 5t4.500-5M6 14v3M3 17.300h6" fill="none" stroke="#eee"/>`))}
              <span class="lr">L R</span><level-meter label="Recording volume" value="15"></level-meter>
            </div>
            ${this.grip()}
            <div class="meter">
              ${this.key("Playback level", html`<svg class="ico" width="18" height="16" viewBox="0 0 22 20">${speaker}</svg>`)}
              <span class="lr">L R</span><level-meter label="Playback volume" value="99"></level-meter>
            </div>
          </div>
        </div>
      </div>

      <div class="timeline">
        <div class="pin">${this.key("Timeline options", icon(16, 14, svg`<path d="M1.500 1.500h13L8 12.500z" fill="#5fcf52" stroke="#10180e"/><path d="M2.500 2h11L8 11z" fill="none" stroke="#d8f0b8"/>`))}</div>
        <div class="times">${TIMES.map((t) => html`<span class="time">${t}</span>`)}</div>
      </div>

      <main class="body">
        <div class="canvas"><audio-track></audio-track></div>
        <div class="vscroll"><div class="thumb"></div></div>
      </main>
      <div class="hscroll"><div class="thumb"></div></div>

      <div class="dock">
        ${this.grip()}
        <div class="snap">
          <label class="check ui"><input class="box" type="checkbox">Snap</label>
          <select class="format" disabled aria-label="Snap to"><option>Milliseconds</option></select>
        </div>
        ${this.grip()}
        <div class="position"><time-field large label="Position" value="00h00m03s"></time-field></div>
        ${this.grip()}
        <div class="range">
          <span class="ui">Selection</span><time-field label="Selection start" value="00h00m03.159s"></time-field>
          ${this.key("Selection settings", icon(14, 14, svg`<path d="M5.500 1h3l.6 2 2-.5 1.500 2.600L11.200 7l1.400 1.900-1.500 2.600-2-.5-.6 2h-3l-.6-2-2 .5L1.400 8.900 2.800 7 1.400 5.100l1.500-2.600 2 .5z" fill="none" stroke="#ddd"/><circle cx="7" cy="7" r="1.800" fill="none" stroke="#ddd"/>`), "gear")}
          <time-field label="Selection end" value="00h00m03.159s"></time-field>
        </div>
        <div class="rest">
          <div class="line">
            ${this.grip()}
            <div class="speed">
              ${this.key("Play at speed", icon(14, 14, svg`<path d="M0 0v14l14-7z" fill="#51dc12"/>`))}
              <div class="rate"><div class="signs"><span>−</span><span>+</span></div><input class="slider" type="range" .value=${"33"} aria-label="Playback speed"></div>
            </div>
          </div>
        </div>
      </div>

      <footer class="status"><span class="slot state">Stopped.</span><span class="slot message"></span><span class="slot extra"></span></footer>

      <div class="taskbar">
        <button class="weather">
          ${icon(32, 22, svg`<path d="M8 8Q10 1 17 1q6 0 8 7 6 2 6 7 0 5-5 5H6q-5 0-5-5 0-6 7-7z" fill="#8fb5ee"/><path d="M2 14q3-5 9-3 5-4 9 1 6-2 9 3 1 5-4 5H6q-5 0-4-6z" fill="#cfe0fb"/>`)}
          <span>12°C<br><span class="dim">Cloudy</span></span>
        </button>
        <div class="apps">
          <button class="app" aria-label="Start">${icon(30, 30, svg`<path d="M1 1h13v13H1zM16 1h13v13H16z" fill="#5fdcfb"/><path d="M1 16h13v13H1zM16 16h13v13H16z" fill="#2fb3f8"/>`)}</button>
          <button class="search">${icon(13, 16, svg`<path d="M11.500 3.500A5.500 5.500 0 1 0 11.500 10.500" fill="none" stroke="#fff" stroke-width="1.700"/>`)}Search</button>
          ${TASK_ICONS.map((t) => html`<button class="app ${t.open ? "open" : ""}" aria-label=${t.name}>${t.art}</button>`)}
        </div>
        <div class="tray">
          <svg class="ico gap" width="16" height="10" viewBox="0 0 16 10"><path d="M1.500 8.500L8 2l6.500 6.500" fill="none" stroke="#fff" stroke-width="1.800"/></svg>
          <svg class="ico gap" width="20" height="14" viewBox="0 0 20 14"><path d="M2 9q0-4 4-4 2-5 6-4 4 1 4 5l-8 6z" fill="#a8a8a8"/><path d="M1 10q1-3 5-2l6-2q7-1 8 4 0 3-3 3H3q-2 0-2-3z" fill="#fff"/></svg>
          ${icon(20, 16, svg`<path d="M1 6q9-9 18 0M4 9q6-6 12 0M7 12q3-3 6 0" fill="none" stroke="#fff" stroke-width="1.600"/><circle cx="10" cy="13.500" r="1.800" fill="#fff"/>`)}
          ${icon(20, 18, svg`<path d="M1 6h3l4-4v14l-4-4H1zM10.500 6q2 3 0 6" fill="none" stroke="#fff" stroke-width="1.400"/><path d="M13 4q4 5 0 10M16 1q5 8 0 16" fill="none" stroke="#6a6f78" stroke-width="1.400"/>`)}
          ${icon(20, 14, svg`<rect x=".8" y=".8" width="15.500" height="12" rx="3" fill="none" stroke="#fff" stroke-width="1.500"/><rect x="3" y="3" width="5.500" height="7.500" rx="1" fill="#fff"/><path d="M17.500 4.500q2 0 2 2.300t-2 2.300z" fill="#fff"/>`)}
          <div class="clock">17:49:01<br>11/10/2023</div>
          <svg class="ico bell" width="18" height="20" viewBox="0 0 18 20"><path d="M1 16q2-2 2-8 1-7 6-7t6 7q0 6 2 8zM6 17h6q-1 3-3 3t-3-3z" fill="#9be7fb"/></svg>
        </div>
      </div>`;
  }
}
